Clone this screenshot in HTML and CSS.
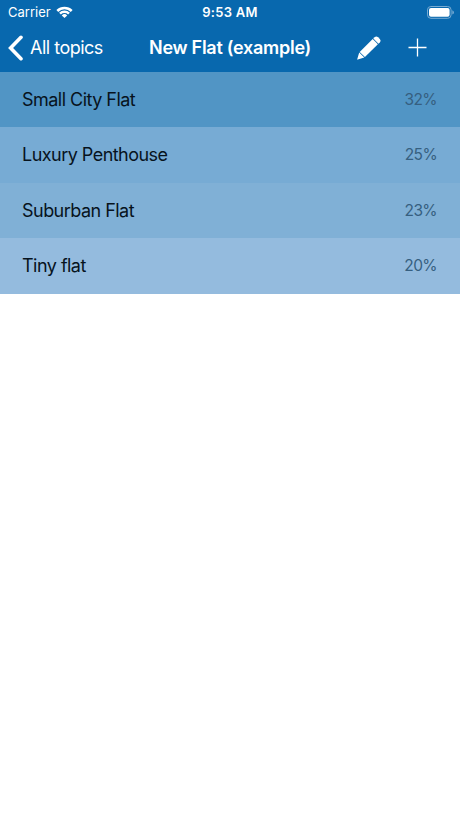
FILE: index.html
```html
<!DOCTYPE html>
<html lang="en">
  <head>
    <meta charset="utf-8">
    <title>New Flat (example)</title>
    <link rel="stylesheet" href="styles.css">
  </head>
  <body>
    <header class="header">
      <div class="status-bar">
        <div class="carrier">
          <span>Carrier</span>
          <svg class="wifi" viewBox="0 0 17 12">
            <path d="M0.4 4.1 A11.6 11.6 0 0 1 16.6 4.1 L14.8 5.9 A9 9 0 0 0 2.2 5.9 Z"/>
            <path d="M3.1 6.8 A7.7 7.7 0 0 1 13.9 6.8 L12.1 8.6 A5.1 5.1 0 0 0 4.9 8.6 Z"/>
            <path d="M5.8 9.4 A3.9 3.9 0 0 1 11.2 9.4 L8.5 12 Z"/>
          </svg>
        </div>
        <div class="time">9:53 AM</div>
        <div class="battery">
          <svg viewBox="0 0 28 13">
            <rect class="battery-frame" x="0.5" y="0.5" width="23.6" height="11.8" rx="3.4"/>
            <rect x="2" y="2" width="20.6" height="8.8" rx="2"/>
            <path class="battery-cap" d="M25.3 4.2 Q27 4.9 27 6.4 T25.3 8.6 Z"/>
          </svg>
        </div>
      </div>
      <nav class="nav-bar">
        <a href="#" class="back">
          <svg viewBox="0 0 16 26"><path d="M13 2.3 L2.6 13 L13 23.7"/></svg>
          <span>All topics</span>
        </a>
        <h1>New Flat (example)</h1>
        <div class="actions">
          <a href="#" class="edit" aria-label="Edit">
            <svg viewBox="0 0 24 24">
              <path d="M17.6 1.2 Q19.3 -0.4 21.1 1.2 L22.8 2.9 Q24.4 4.7 22.8 6.4 L21.5 7.7 L16.3 2.5 Z"/>
              <path d="M15.7 3.1 L20.9 8.3 L7.9 21.1 L2.7 15.9 Z"/>
              <path d="M2.2 16.5 L7.3 21.6 L0.8 23.6 Q0 23.8 0.3 23 Z"/>
            </svg>
          </a>
          <a href="#" class="add" aria-label="Add">
            <svg viewBox="0 0 19 19"><path d="M9.5 0.5 V18.5 M0.5 9.5 H18.5"/></svg>
          </a>
        </div>
      </nav>
    </header>
    <ul class="option-list">
      <li class="option rank-1"><span class="name">Small City Flat</span><span class="percent">32%</span></li>
      <li class="option rank-2"><span class="name">Luxury Penthouse</span><span class="percent">25%</span></li>
      <li class="option rank-3"><span class="name">Suburban Flat</span><span class="percent">23%</span></li>
      <li class="option rank-4"><span class="name">Tiny flat</span><span class="percent">20%</span></li>
    </ul>
  </body>
</html>
```
FILE: styles.css
```css
body {
  margin: 0;
  background-color: #ffffff;
  font-family: Inter, "Liberation Sans", sans-serif;
}

a {
  color: inherit;
  text-decoration: none;
}

svg {
  display: block;
  fill: #ffffff;
}

.header {
  height: 71.5px;
  background-color: #0868ae;
  color: #ffffff;
}

.status-bar {
  display: grid;
  grid-template-columns: 1fr auto 1fr;
  align-items: center;
  height: 24px;
  padding: 0 8px;
  font-size: 13px;
  line-height: 24px;
}

.carrier {
  display: flex;
  align-items: center;
  gap: 5px;
}

.wifi {
  width: 17px;
  height: 12px;
}

.time {
  font-weight: 600;
  letter-spacing: 0.3px;
}

.battery {
  justify-self: end;
  margin-right: -3px;
}

.battery svg {
  width: 28px;
  height: 13px;
}

.battery-frame {
  fill: none;
  stroke: #78abd2;
}

.battery-cap {
  fill: #78abd2;
}

.nav-bar {
  display: grid;
  grid-template-columns: 1fr auto 1fr;
  align-items: center;
  height: 47px;
  padding: 0 8px;
}

.back {
  display: flex;
  align-items: center;
  gap: 6px;
  font-size: 18px;
  letter-spacing: -0.5px;
}

.back svg {
  width: 16px;
  height: 26px;
}

.back path {
  fill: none;
  stroke: #ffffff;
  stroke-width: 3.6;
  stroke-linecap: round;
}

h1 {
  margin: 0;
  font-size: 18px;
  font-weight: 600;
  letter-spacing: -0.27px;
}

.actions {
  display: flex;
  align-items: center;
  justify-content: flex-end;
  gap: 27px;
  margin-right: 25px;
}

.edit svg {
  width: 24px;
  height: 24px;
}

.add svg {
  width: 19px;
  height: 19px;
}

.add path {
  stroke: #ffffff;
  stroke-width: 1.3;
}

.option-list {
  margin: 0;
  padding: 0;
  list-style: none;
}

.option {
  display: flex;
  align-items: center;
  justify-content: space-between;
  height: 55.5px;
  padding: 0 23px 0 22px;
}

.name {
  color: #07131d;
  font-size: 18px;
  line-height: 23px;
  letter-spacing: -0.53px;
}

.percent {
  color: #365f80;
  font-size: 15.5px;
  letter-spacing: -0.6px;
}

.rank-1 {
  background-color: #5195c5;
}

.rank-2 {
  background-color: #77abd4;
}

.rank-3 {
  background-color: #80b0d6;
}

.rank-4 {
  background-color: #94bbde;
}
```
